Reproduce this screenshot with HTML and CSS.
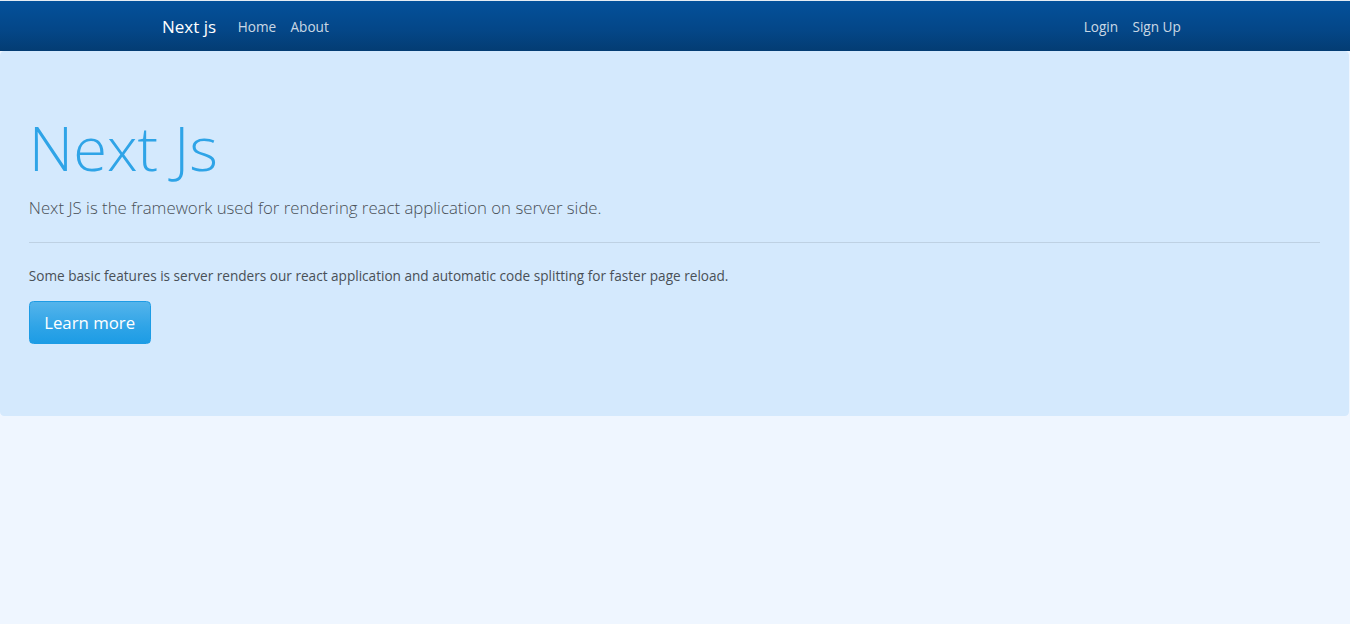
FILE: index.html
```html
<!DOCTYPE html>
<html lang="en">
<head>
<meta charset="utf-8">
<title>Next js</title>
<link rel="stylesheet" href="styles.css">
</head>
<body>
<nav class="navbar">
  <div class="container nav-inner">
    <div class="nav-left">
      <a class="brand" href="#">Next js</a>
      <a class="nav-link" href="#">Home</a>
      <a class="nav-link" href="#">About</a>
    </div>
    <div class="nav-right">
      <a class="nav-link" href="#">Login</a>
      <a class="nav-link" href="#">Sign Up</a>
    </div>
  </div>
</nav>
<main class="jumbotron">
  <h1 class="display">Next Js</h1>
  <p class="lead">Next JS is the framework used for rendering react application on server side.</p>
  <hr class="divider">
  <p class="body-text">Some basic features is server renders our react application and automatic code splitting for faster page reload.</p>
  <p class="lead"><a class="btn" href="#">Learn more</a></p>
</main>
</body>
</html>
```
FILE: styles.css
```css
* { box-sizing: border-box; }
html, body { margin: 0; padding: 0; }
body {
  background: #eff6ff;
  border-top: 1px solid #e4ecf4;
  font-family: "Open Sans", "Noto Sans", sans-serif;
  font-size: 13.6px;
  line-height: 21.6px;
  color: #495057;
}
a { text-decoration: none; }
.navbar {
  height: 50px;
  background-image: linear-gradient(#04519b, #044687 60%, #033c73);
  display: flex;
  align-items: center;
  padding-top: 1px;
}
.container {
  width: 1026px;
  margin: 0 auto;
}
.nav-inner {
  display: flex;
  justify-content: space-between;
  align-items: center;
}
.nav-left, .nav-right { display: flex; align-items: center; }
.brand {
  color: #fff;
  font-size: 17px;
  line-height: 27px;
  margin-right: 14.4px;
}
.nav-link {
  color: rgba(255, 255, 255, 0.8);
  padding: 7.2px;
  line-height: 21.6px;
}
.jumbotron {
  background: #d4e9fd;
  border-radius: 4.3px;
  padding: 57.6px 28.8px;
  margin: 0 1px 28.8px 0;
}
.display {
  font-size: 61.5px;
  font-weight: 300;
  line-height: 77.8px;
  color: #2fa4e7;
  margin: 0 0 7.2px;
}
.lead {
  font-size: 16.8px;
  font-weight: 300;
  line-height: 27px;
  margin: 0 0 14.4px;
}
.divider {
  border: 0;
  border-top: 1px solid rgba(0, 0, 0, 0.1);
  margin: 21.6px 0;
}
.body-text { margin: 0 0 14.4px; }
.btn {
  display: inline-block;
  vertical-align: top;
  color: #fff;
  font-size: 16.8px;
  font-weight: 400;
  line-height: 27px;
  padding: 7.2px 14.4px;
  border: 1px solid #1d9ce5;
  border-radius: 4.3px;
  background-image: linear-gradient(#54b4eb, #2fa4e7 60%, #1d9ce5);
}
```
